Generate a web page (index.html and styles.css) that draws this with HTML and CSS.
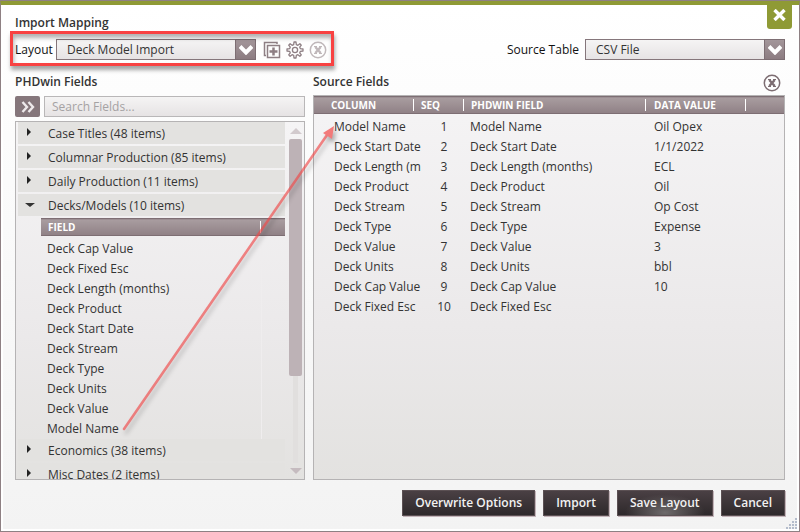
FILE: index.html
```html
<!DOCTYPE html>
<html lang="en">
<head>
  <meta charset="UTF-8">
  <title>Import Mapping</title>
  <meta name="viewport" content="width=device-width, initial-scale=1.0">
  <link rel="stylesheet" href="styles.css">
</head>
<body>
  <div class="dialog">
    <button class="close" aria-label="Close">
      <svg width="13" height="12" viewBox="0 0 13 12"><path d="M1.500 1L11.500 11M11.500 1L1.500 11" stroke="#fff" stroke-width="3.400"/></svg>
    </button>

    <h1>Import Mapping</h1>

    <!-- layout / source table -->
    <div class="toolbar">
      <div class="layout-group">
        <label class="layout-label" for="layout">Layout</label>
        <div class="select">
          <select id="layout"><option>Deck Model Import</option></select>
          <span class="arrow"><svg width="14" height="10" viewBox="0 0 14 10"><path d="M1 1.500L7 7.500L13 1.500" fill="none" stroke="#fff" stroke-width="4"/></svg></span>
        </div>
        <button class="icon" aria-label="Add layout">
          <svg width="18" height="18" viewBox="0 0 18 18"><g fill="none" stroke="#8e7f84"><path d="M3 14.500H1.500V1.500H14V3" stroke-width="1.500"/><rect x="4.500" y="4.500" width="12" height="12" stroke-width="1.500"/><path d="M10.500 6.500V14.500M6.500 10.500H14.500" stroke-width="2.500"/></g></svg>
        </button>
        <button class="icon" aria-label="Layout settings">
          <svg width="18" height="18" viewBox="0 0 18 18"><g fill="none" stroke="#8e7f84" stroke-width="1.300" stroke-linejoin="round"><path d="M7.700 3.600L8 1H10L10.300 3.600L11.900 4.300L13.900 2.700L15.300 4.100L13.700 6.100L14.400 7.700L17 8V10L14.400 10.300L13.700 11.900L15.300 13.900L13.900 15.300L11.900 13.700L10.300 14.400L10 17H8L7.700 14.400L6.100 13.700L4.100 15.300L2.700 13.900L4.300 11.900L3.600 10.300L1 10V8L3.600 7.700L4.300 6.100L2.700 4.100L4.100 2.700L6.100 4.300Z"/><circle cx="9" cy="9" r="2.600"/></g></svg>
        </button>
        <button class="icon faded" aria-label="Delete layout">
          <svg width="18" height="18" viewBox="0 0 18 18"><g fill="none" stroke="#8e7f84"><circle cx="9" cy="9" r="7.700" stroke-width="1.500"/><path d="M6.300 6L11.700 12M11.700 6L6.300 12" stroke-width="2.400"/><path d="M5 5.500H8M10 5.500H13M5 12.500H8M10 12.500H13"/></g></svg>
        </button>
      </div>
      <div class="source-group">
        <label for="source">Source Table</label>
        <div class="select">
          <select id="source"><option>CSV File</option></select>
          <span class="arrow"><svg width="14" height="10" viewBox="0 0 14 10"><path d="M1 1.500L7 7.500L13 1.500" fill="none" stroke="#fff" stroke-width="4"/></svg></span>
        </div>
      </div>
    </div>

    <div class="columns">
      <!-- PHDwin fields -->
      <section class="left">
        <h2>PHDwin Fields</h2>
        <div class="search">
          <button class="expand" aria-label="Expand all">
            <svg width="14" height="12" viewBox="0 0 14 12"><path d="M1.500 1L6 6L1.500 11M7.500 1L12 6L7.500 11" fill="none" stroke="#eee9eb" stroke-width="2.400"/></svg>
          </button>
          <input type="text" placeholder="Search Fields..." aria-label="Search Fields">
        </div>
        <div class="panel tree">
          <div class="tree-list">
            <button class="group">Case Titles (48 items)</button>
            <button class="group">Columnar Production (85 items)</button>
            <button class="group">Daily Production (11 items)</button>
            <button class="group open">Decks/Models (10 items)</button>
            <table class="fields">
              <thead><tr><th>FIELD</th><th class="end"></th></tr></thead>
              <tbody>
                <tr><td>Deck Cap Value</td><td></td></tr>
                <tr><td>Deck Fixed Esc</td><td></td></tr>
                <tr><td>Deck Length (months)</td><td></td></tr>
                <tr><td>Deck Product</td><td></td></tr>
                <tr><td>Deck Start Date</td><td></td></tr>
                <tr><td>Deck Stream</td><td></td></tr>
                <tr><td>Deck Type</td><td></td></tr>
                <tr><td>Deck Units</td><td></td></tr>
                <tr><td>Deck Value</td><td></td></tr>
                <tr><td>Model Name</td><td></td></tr>
              </tbody>
            </table>
            <button class="group">Economics (38 items)</button>
            <button class="group">Misc Dates (2 items)</button>
          </div>
          <div class="scrollbar">
            <span class="up"></span>
            <div class="track"><div class="thumb"></div></div>
            <span class="down"></span>
          </div>
        </div>
      </section>

      <!-- source fields -->
      <section class="right">
        <div class="heading">
          <h2>Source Fields</h2>
          <button class="icon" aria-label="Clear source fields">
            <svg width="18" height="18" viewBox="0 0 18 18"><g fill="none" stroke="#7d6d72"><circle cx="9" cy="9" r="7.700" stroke-width="1.500"/><path d="M6.300 6L11.700 12M11.700 6L6.300 12" stroke-width="2.400"/><path d="M5 5.500H8M10 5.500H13M5 12.500H8M10 12.500H13"/></g></svg>
          </button>
        </div>
        <div class="panel">
          <table class="source">
            <thead>
              <tr><th class="column">COLUMN</th><th class="seq">SEQ</th><th class="field">PHDWIN FIELD</th><th class="value">DATA VALUE</th><th></th></tr>
            </thead>
            <tbody>
              <tr><td><span>Model Name</span></td><td>1</td><td>Model Name</td><td>Oil Opex</td><td></td></tr>
              <tr><td><span>Deck Start Date</span></td><td>2</td><td>Deck Start Date</td><td>1/1/2022</td><td></td></tr>
              <tr><td><span>Deck Length (months)</span></td><td>3</td><td>Deck Length (months)</td><td>ECL</td><td></td></tr>
              <tr><td><span>Deck Product</span></td><td>4</td><td>Deck Product</td><td>Oil</td><td></td></tr>
              <tr><td><span>Deck Stream</span></td><td>5</td><td>Deck Stream</td><td>Op Cost</td><td></td></tr>
              <tr><td><span>Deck Type</span></td><td>6</td><td>Deck Type</td><td>Expense</td><td></td></tr>
              <tr><td><span>Deck Value</span></td><td>7</td><td>Deck Value</td><td>3</td><td></td></tr>
              <tr><td><span>Deck Units</span></td><td>8</td><td>Deck Units</td><td>bbl</td><td></td></tr>
              <tr><td><span>Deck Cap Value</span></td><td>9</td><td>Deck Cap Value</td><td>10</td><td></td></tr>
              <tr><td><span>Deck Fixed Esc</span></td><td>10</td><td>Deck Fixed Esc</td><td></td><td></td></tr>
            </tbody>
          </table>
        </div>
      </section>
    </div>

    <div class="footer">
      <button>Overwrite Options</button>
      <button>Import</button>
      <button class="default">Save Layout</button>
      <button>Cancel</button>
    </div>

    <svg class="pointer" width="220" height="316" viewBox="0 0 220 316">
      <path d="M5 312L208 18" stroke="#f04848" stroke-opacity="0.650" stroke-width="2.600" stroke-linecap="round"/>
      <path d="M215 9L213 22L204 16Z" fill="#f27a7a"/>
    </svg>
    <svg class="grip" width="12" height="12" viewBox="0 0 12 12"><path d="M9 1h2v2h-2zM6 4h2v2h-2zM9 4h2v2h-2zM3 7h2v2h-2zM6 7h2v2h-2zM9 7h2v2h-2zM0 10h2v2h-2zM3 10h2v2h-2zM6 10h2v2h-2zM9 10h2v2h-2z" fill="#b4bccb"/></svg>
  </div>
</body>
</html>
```
FILE: styles.css
```css
* {
  box-sizing: border-box;
}

body {
  margin: 0;
  font-family: "Open Sans", "Noto Sans", sans-serif;
  font-size: 12px;
  line-height: 16px;
  color: #333;
}

button,
input,
select {
  font: inherit;
  color: inherit;
  margin: 0;
  padding: 0;
  border: 0;
  border-radius: 0;
  background: none;
}

.dialog {
  position: relative;
  display: flex;
  flex-direction: column;
  height: 100vh;
  min-height: 400px;
  padding: 10px 14px 15px;
  border: 1px solid #8e8083;
  border-top: 5px solid #8f9a35;
  background: linear-gradient(#fff, #f3f3f3);
  box-shadow: inset 0 0 0 2px #fff;
}

.dialog::before {
  content: "";
  position: absolute;
  top: -5px;
  left: -1px;
  right: -1px;
  height: 1px;
  background: #8e8083;
}

.close {
  position: absolute;
  top: 0;
  right: 7px;
  width: 25px;
  height: 24px;
  padding-bottom: 4px;
  display: flex;
  justify-content: center;
  align-items: center;
  border-radius: 0 0 3px 3px;
  background: #8f9a35;
}

h1,
h2 {
  margin: 0;
  font-size: 12px;
  line-height: 16px;
  font-weight: 600;
}

.toolbar {
  display: flex;
  justify-content: space-between;
  margin-top: 8px;
  color: #111;
}

.layout-group,
.source-group {
  position: relative;
  display: flex;
  align-items: center;
}

/* red highlight round the layout controls */
.layout-group::after {
  content: "";
  position: absolute;
  inset: -8px -7px -6px -5px;
  border: 3px solid #f84242;
  box-shadow: 1px 4px 4px rgba(0, 0, 0, 0.35), inset 1px 4px 4px rgba(0, 0, 0, 0.3);
  pointer-events: none;
}

.layout-label {
  width: 41px;
}

.source-group label {
  margin-right: 6px;
}

.select {
  position: relative;
  width: 200px;
  height: 21px;
}

.select select {
  appearance: none;
  width: 100%;
  height: 100%;
  padding: 0 24px 0 10px;
  border: 1px solid #85767b;
  background: linear-gradient(#f5f4f4, #e6e3e4);
  color: #333;
}

.select .arrow {
  position: absolute;
  top: 0;
  right: 0;
  width: 21px;
  height: 100%;
  display: flex;
  justify-content: center;
  align-items: center;
  border: 1px solid #7d6e73;
  background: linear-gradient(#a3969a, #8c7c81);
  pointer-events: none;
}

.icon {
  width: 18px;
  height: 18px;
}

.icon svg {
  display: block;
}

.layout-group .icon {
  margin-left: 7px;
}

.layout-group .icon + .icon {
  margin-left: 5px;
}

.faded {
  opacity: 0.55;
}

.columns {
  flex: 1;
  min-height: 0;
  display: flex;
  gap: 8px;
}

.left,
.right {
  display: flex;
  flex-direction: column;
  padding-top: 14px;
}

.left {
  width: 290px;
  flex: none;
}

.right {
  flex: 1;
  min-width: 0;
}

.search {
  display: flex;
  gap: 4px;
  margin: 6px 0 4px;
}

.expand {
  width: 25px;
  height: 21px;
  display: flex;
  justify-content: center;
  align-items: center;
  border-radius: 2px;
  background: #85767b;
}

.search input {
  flex: 1;
  min-width: 0;
  height: 21px;
  padding: 0 7px;
  border: 1px solid #b9b7b8;
  background: linear-gradient(#f5f4f4, #e6e3e4);
}

.search input::placeholder {
  color: #a5a2a3;
}

.panel {
  flex: 1;
  min-height: 0;
  overflow: hidden;
  border: 1px solid #b5b3b4;
  background: linear-gradient(#f5f4f5, #ebe9ea 60%, #e3e2e0);
}

.tree {
  display: flex;
  padding-left: 2px;
}

.tree-list {
  flex: 1;
  overflow: hidden;
}

.group {
  display: flex;
  align-items: center;
  width: 100%;
  height: 22px;
  padding-top: 2px;
  margin-bottom: 2px;
  background: #e3e2e0;
}

.group::before {
  content: "";
  margin: 0 17px 4px 9px;
  border: 4px solid transparent;
  border-left-color: #222;
  border-right: 0;
}

.group.open::before {
  margin: 0 13px 2px 7px;
  width: 0;
  border: 5px solid transparent;
  border-top: 4px solid #333;
  border-bottom: 0;
}

table {
  border-collapse: collapse;
  table-layout: fixed;
}

th {
  position: relative;
  height: 17px;
  padding: 0;
  border-top: 1px solid #7d6e73;
  border-bottom: 1px solid #7d6e73;
  background: linear-gradient(#a99da0, #8f8085);
  color: #fff;
  font-size: 10px;
  line-height: 14px;
  text-align: left;
}

th:not(:last-child)::after {
  content: "";
  position: absolute;
  top: 2px;
  bottom: 2px;
  right: 0;
  width: 1px;
  background: #fff;
}

td {
  height: 20px;
  padding: 0;
  white-space: nowrap;
}

.fields {
  width: calc(100% - 23px);
  margin-left: 23px;
}

.fields th:first-child {
  padding-left: 7px;
}

.fields .end {
  width: 24px;
}

.fields td:first-child {
  padding-left: 6px;
  border-right: 1px solid #efedee;
}

tbody::before {
  content: "";
  display: table-row;
  height: 3px;
}

.scrollbar {
  display: flex;
  flex-direction: column;
  align-items: center;
  width: 13px;
  margin: 6px 2px 5px 4px;
}

.up,
.down {
  border: 6px solid transparent;
  border-top: 0;
  border-bottom-color: #d2cacd;
}

.down {
  border-top: 6px solid #c5bbbf;
  border-bottom: 0;
}

.track {
  flex: 1;
  width: 5px;
  margin: 5px 0;
  background: #e1dfde;
}

.thumb {
  width: 13px;
  height: 73%;
  margin-left: -4px;
  border-radius: 2px;
  background: #bdb2b6;
}

.heading {
  display: flex;
  justify-content: space-between;
  align-items: flex-start;
  height: 21px;
}

.heading .icon {
  margin-right: 4px;
}

.source {
  width: 100%;
}

.source .column {
  width: 100px;
  padding-left: 17px;
}

.source .seq {
  width: 50px;
  padding-left: 7px;
}

.source .field {
  width: 182px;
  padding-left: 7px;
}

.source .value {
  width: 100px;
  padding-left: 8px;
}

.source th:last-child {
  width: auto;
}

.source td:nth-child(1) {
  padding-left: 20px;
}

/* long names are cut just past the column edge */
.source td:nth-child(1) span {
  display: block;
  width: 87px;
  overflow: hidden;
}

.source td:nth-child(2) {
  padding-left: 10px;
  text-align: center;
}

.source td:nth-child(3) {
  padding-left: 6px;
}

.source td:nth-child(4) {
  padding-left: 8px;
}

.footer {
  display: flex;
  justify-content: flex-end;
  gap: 8px;
  margin-top: 10px;
}

.footer button {
  height: 26px;
  padding: 0 12px;
  border: 1px solid #5b5053;
  background: linear-gradient(#4a4044, #2e292b);
  box-shadow: 1px 1px 0 #c3b4b9;
  color: #f2f2f2;
  font-weight: 600;
}

.footer .default {
  background: radial-gradient(ellipse at 50% 90%, #6e6a6b, transparent 60%), linear-gradient(#4a4044, #2e292b);
}

/* arrow from the Model Name field to its mapped column */
.pointer {
  position: absolute;
  top: 112px;
  left: 118px;
  filter: drop-shadow(2px 4px 2px rgba(0, 0, 0, 0.3));
  pointer-events: none;
}

.grip {
  position: absolute;
  right: 1px;
  bottom: 2px;
}
```
